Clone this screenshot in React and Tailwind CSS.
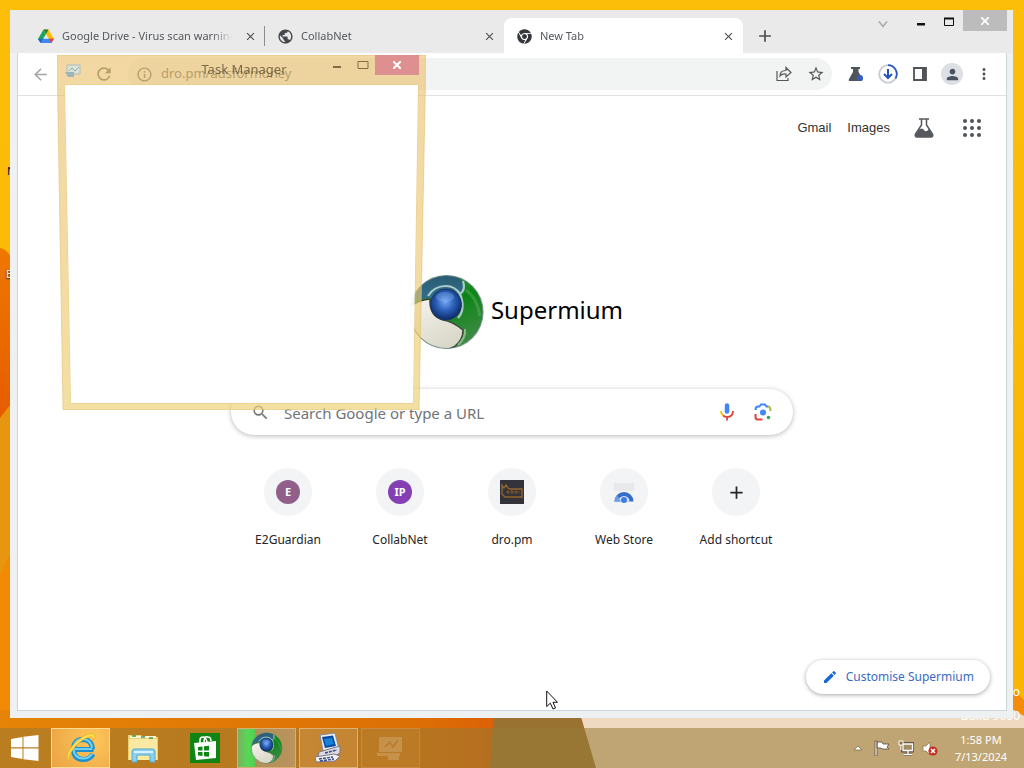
import React from "react";
import { MdArrowBack, MdRefresh, MdInfoOutline, MdStarBorder, MdPerson, MdMoreVert, MdSearch, MdEdit, MdAdd, MdClose, MdPublic } from "react-icons/md";
import { FaChrome } from "react-icons/fa";

function Wallpaper() {
  return (
    <svg className="absolute inset-0 h-full w-full" viewBox="0 0 1024 768" preserveAspectRatio="none" aria-hidden="true">
      <defs>
        <linearGradient id="yellow" x1="0" y1="0" x2="0" y2="1">
          <stop offset="0" stopColor="#fcbe08" />
          <stop offset="1" stopColor="#fab400" />
        </linearGradient>
        <linearGradient id="left" x1="0" y1="0" x2="0" y2="1">
          <stop offset="0" stopColor="#ee7800" />
          <stop offset="1" stopColor="#e65c00" />
        </linearGradient>
        <linearGradient id="floor" x1="0" y1="0" x2="1" y2="0">
          <stop offset="0" stopColor="#e58407" />
          <stop offset="0.8" stopColor="#dd7005" />
          <stop offset="1" stopColor="#dc5f05" />
        </linearGradient>
      </defs>
      <rect width="1024" height="768" fill="url(#yellow)" />
      <path d="M0 248Q8 249 12 260V420H0Z" fill="url(#left)" />
      <path d="M0 418L14 400V620H0Z" fill="#e6960f" />
      <path d="M0 575L14 545V768H0Z" fill="#f38a05" />
      <rect y="710" width="510" height="58" fill="url(#floor)" />
      <path d="M494 710H582L600 768H490Z" fill="#997232" />
      <path d="M579 710H1024V768H596Z" fill="#efdac1" />
      <path d="M1004 680L1024 700V716L1004 704Z" fill="#f58b0b" />
    </svg>
  );
}

function SupermiumLogo({ className }) {
  return (
    <svg className={className} viewBox="0 0 76 76" aria-hidden="true">
      <defs>
        <linearGradient id="sg" x1="0" y1="0" x2="0.4" y2="1">
          <stop offset="0" stopColor="#3f9a4c" />
          <stop offset="0.5" stopColor="#0c8415" />
          <stop offset="1" stopColor="#3c8a42" />
        </linearGradient>
        <linearGradient id="sb" x1="0" y1="0" x2="0" y2="1">
          <stop offset="0" stopColor="#2a5a72" />
          <stop offset="1" stopColor="#337390" />
        </linearGradient>
        <linearGradient id="sc" x1="0" y1="0" x2="0.6" y2="1">
          <stop offset="0" stopColor="#f6f5ef" />
          <stop offset="1" stopColor="#d9d7c8" />
        </linearGradient>
        <radialGradient id="ball" cx="0.48" cy="0.42" r="0.6">
          <stop offset="0" stopColor="#74a8f2" />
          <stop offset="0.45" stopColor="#2e62bd" />
          <stop offset="1" stopColor="#09265f" />
        </radialGradient>
        <clipPath id="disc"><circle cx="37.5" cy="38" r="36.5" /></clipPath>
      </defs>
      <g clipPath="url(#disc)">
        <rect width="76" height="76" fill="url(#sg)" />
        <path d="M0 30Q6 25 20 24L37 30L50 24Q55 18 54 8L46 0H0Z" fill="url(#sb)" />
        <path d="M0 34Q8 26 21 25Q20 42 34 46Q43 47 54 56Q54 66 46 72Q40 76 30 76H0Z" fill="url(#sc)" stroke="#3f4b40" strokeWidth="1.5" />
        <path d="M49 71Q57 64 56 55" fill="none" stroke="#87bc86" strokeWidth="2" />
        <path d="M57 16Q68 24 71 42" fill="none" stroke="#74b975" strokeWidth="3" opacity="0.35" />
      </g>
      <path d="M19 22Q25 12 37 12Q46 12 51 20Q57 16 54 7M51 20Q57 35 49 44" fill="none" stroke="#a9cbc9" strokeWidth="2.2" />
      <circle cx="37" cy="30.500" r="15.500" fill="url(#ball)" stroke="#153864" />
      <ellipse cx="36" cy="23" rx="9" ry="5" fill="#9bc2f5" opacity="0.3" />
      <circle cx="37.500" cy="38" r="36.500" fill="none" stroke="#6c8984" strokeWidth="1.2" opacity="0.8" />
    </svg>
  );
}

function DriveIcon() {
  return (
    <svg className="size-4 shrink-0" viewBox="0 0 16 16" aria-hidden="true">
      <path d="M5.500 1.500L0 11L2.700 15L8 6Z" fill="#1da462" />
      <path d="M5.500 1.500H10.500L16 11H10.800Z" fill="#fbbc04" />
      <path d="M2.700 15L5.300 10.700H16L13.300 15Z" fill="#4285f4" />
      <path d="M5.300 10.700L2.700 15L0 11Z" fill="#1b66d2" />
      <path d="M10.800 10.700H16L13.300 15Z" fill="#ea4335" />
      <path d="M5.500 1.500H10.500L8 6Z" fill="#188038" />
    </svg>
  );
}

function Tab({ icon, title, active, divider }) {
  return (
    <div className={"flex h-9 w-[239px] min-w-0 items-center gap-2 px-3 " + (active ? "rounded-t-lg bg-white " : "") + (divider ? "bg-[linear-gradient(#8a8d91,#8a8d91)] bg-[length:1px_20px] bg-right bg-no-repeat" : "")}>
      <span className="flex w-4 shrink-0 justify-center">{icon}</span>
      <a href="#tab" className="min-w-0 flex-1 overflow-hidden whitespace-nowrap text-[11px] text-[#55585c] [mask-image:linear-gradient(to_right,black_88%,transparent)]">{title}</a>
      <button aria-label={"Close " + title} className="-mr-1 ml-1 shrink-0 text-[#4a4d51]"><MdClose size={13} /></button>
    </div>
  );
}

function WindowControls() {
  return (
    <div className="ml-auto flex h-full items-start">
      <button aria-label="Search tabs" className="flex h-7 w-8 items-center justify-center">
        <svg className="size-3" viewBox="0 0 12 12" fill="none" stroke="#a9a9a9" strokeWidth="1.500"><path d="M2 3.500L6 8.500L10 3.500" /></svg>
      </button>
      <button aria-label="Minimise" className="ml-2 flex h-6 w-7 items-center justify-center">
        <svg className="size-3" viewBox="0 0 12 12"><path d="M2 7H10V9.500H2Z" fill="#111" /></svg>
      </button>
      <button aria-label="Maximise" className="flex h-6 w-7 items-center justify-center">
        <svg className="h-3 w-3" viewBox="0 0 12 12" fill="none" stroke="#111"><path d="M1.500 2.500H10.500V9.500H1.500Z" /><path d="M1 2.500H11" strokeWidth="2" /></svg>
      </button>
      <button aria-label="Close window" className="flex h-[21px] w-11 items-center justify-center bg-[#bcbcbc] text-white">
        <svg className="size-2" viewBox="0 0 8 8" stroke="currentColor" strokeWidth="1.800"><path d="M0 0L8 8M8 0L0 8" /></svg>
      </button>
    </div>
  );
}

function ToolButton({ label, children }) {
  return <button aria-label={label} className="flex size-8 shrink-0 items-center justify-center text-[#54575b]">{children}</button>;
}

function Toolbar() {
  return (
    <div className="flex h-[43px] items-center border-b border-[#dfe1e3] bg-white px-1.5">
      <ToolButton label="Back"><span className="text-[#a5a5a5]"><MdArrowBack size={19} /></span></ToolButton>
      <div className="w-8 shrink-0" />
      <ToolButton label="Reload"><MdRefresh size={20} /></ToolButton>
      <div className="ml-2 flex h-8 min-w-0 flex-1 items-center rounded-full bg-[#f2f3f3] pl-2 text-[#54575b]">
        <MdInfoOutline size={17} />
        <input aria-label="Address" defaultValue="dro.pm/adsformoney" className="ml-2 min-w-0 flex-1 bg-transparent text-[13px] outline-none" />
        <ToolButton label="Share">
          <svg className="size-4" viewBox="0 0 16 16" fill="none" stroke="currentColor" strokeWidth="1.200"><path d="M1 5V14.500H12V12M4 10Q4 4.500 10 4.500V1.500L15 6.500L10 11V8Q6 7.500 4 10Z" /></svg>
        </ToolButton>
        <ToolButton label="Bookmark"><MdStarBorder size={18} /></ToolButton>
      </div>
      <div className="ml-2 flex">
        <ToolButton label="Experiments">
          <svg className="size-4" viewBox="0 0 16 16"><path d="M3 1H12V3H10.500V6L14.500 13Q15 15 13 15H2Q0 15 1 13L5 6V3H3Z" fill="#50545b" /><circle cx="12" cy="12" r="3" fill="#365cbf" /></svg>
        </ToolButton>
        <ToolButton label="Downloads">
          <svg className="size-5" viewBox="0 0 20 20" fill="none"><circle cx="10" cy="10" r="8.800" stroke="#c6cbd0" strokeWidth="1.800" /><path d="M10 1.200A8.800 8.800 0 0 1 17.500 14.500" stroke="#2d5bc4" strokeWidth="1.800" /><path d="M10 5V14M6 10L10 14L14 10" stroke="#2452b8" strokeWidth="2" /></svg>
        </ToolButton>
        <ToolButton label="Side panel">
          <svg className="size-4" viewBox="0 0 16 16"><path d="M2 2H14V14H2Z" fill="none" stroke="#505357" strokeWidth="1.800" /><path d="M10 2H14V14H10Z" fill="#505357" /></svg>
        </ToolButton>
        <ToolButton label="Profile"><span className="flex size-[22px] items-center justify-center rounded-full bg-[#dcdfe4] text-[#4a5260]"><MdPerson size={17} /></span></ToolButton>
        <ToolButton label="Menu"><MdMoreVert size={18} /></ToolButton>
      </div>
    </div>
  );
}

const shortcuts = [
  { name: "E2Guardian", icon: <span className="flex size-6 items-center justify-center rounded-full bg-[#90608a] text-[11px] font-bold text-white">E</span> },
  { name: "CollabNet", icon: <span className="flex size-6 items-center justify-center rounded-full bg-[#843fb3] text-[11px] font-bold text-white">IP</span> },
  {
    name: "dro.pm",
    icon: (
      <svg className="size-6" viewBox="0 0 24 24"><rect width="24" height="24" fill="#35333a" /><path d="M2 5L4 8L6 5L8 8L10 9H22V17H5L2 14Z" fill="none" stroke="#94672d" strokeWidth="1.300" /><path d="M6 12H20M8 10V14M12 10V14M16 10V14M5 17H20" stroke="#785729" strokeWidth="1.200" /></svg>
    ),
  },
  {
    name: "Web Store",
    icon: (
      <svg className="size-6" viewBox="0 0 24 24"><path d="M2 3H22V11H2Z" fill="#e7e9ed" /><path d="M2.500 21.500A9.500 9.500 0 0 1 21.500 21.500Z" fill="#356dcb" /><path d="M6.500 21.500A5.500 5.500 0 0 1 17.500 21.500Z" fill="#dbe8ff" /><circle cx="12" cy="20" r="3" fill="#3f7ee0" /><path d="M2.500 21.500Q3 17 5 15L9 21.500Z" fill="#6c9eea" /></svg>
    ),
  },
  { name: "Add shortcut", icon: <MdAdd size={21} /> },
];

function NewTabPage() {
  return (
    <main className="flex flex-1 flex-col bg-white">
      <nav className="flex h-16 items-center justify-end pr-6 font-['Liberation_Sans',sans-serif] text-[13px] text-[#333]">
        <a href="#gmail">Gmail</a>
        <a href="#images" className="ml-4">Images</a>
        <button aria-label="Labs" className="ml-6">
          <svg className="size-5" viewBox="0 0 20 20"><path d="M5 1H15M7.500 1V7L1.500 16Q.5 19 3 19H17Q19.500 19 18.500 16L12.500 7V1" fill="none" stroke="#55585c" strokeWidth="1.500" /><path d="M4.500 12Q8 9 10 12T15 11L18.500 17Q18 19 17 19H3Q1 18 2 16Z" fill="#55585c" /></svg>
        </button>
        <button aria-label="Apps" className="ml-7">
          <svg className="size-5" viewBox="0 0 20 20" fill="#505357">{[4, 10, 16].map((y) => [4, 10, 16].map((x) => <circle key={x + "-" + y} cx={x + (x - 10) / 6} cy={y + (y - 10) / 6} r="2" />))}</svg>
        </button>
      </nav>
      <h1 className="mt-[114px] flex items-center justify-center pl-2 text-[24px] font-normal text-black">
        <SupermiumLogo className="mr-1.5 size-[76px]" />
        <span className="pb-1">Supermium</span>
      </h1>
      <form className="mx-auto mt-[39px] flex h-[46px] w-[562px] max-w-full items-center rounded-full bg-white px-5 shadow-[0_1px_5px_rgba(32,33,36,0.32)]">
        <span className="text-[#77797c]"><MdSearch size={19} /></span>
        <input aria-label="Search Google or type a URL" placeholder="Search Google or type a URL" className="ml-3.5 min-w-0 flex-1 bg-transparent pt-0.5 text-[15px] outline-none placeholder:text-[#717478] placeholder:opacity-100" />
        <button type="button" aria-label="Voice search" className="mr-4">
          <svg className="h-5 w-5" viewBox="0 0 20 20" fill="none"><path d="M10 3.500V9.500" stroke="#4285f4" strokeWidth="4.500" strokeLinecap="round" /><path d="M4 9Q4 12 6 13.500" stroke="#fbbc04" strokeWidth="1.800" /><path d="M6 13.500Q8 15 10 15Q16 15 16 9M10 15V18.500" stroke="#db4437" strokeWidth="1.800" /></svg>
        </button>
        <button type="button" aria-label="Image search">
          <svg className="h-5 w-5" viewBox="0 0 20 20" fill="none" strokeWidth="2"><path d="M2.500 8Q2.500 4.500 5 4.500H6.500L8 2.500H12L13.500 4.500H15" stroke="#4285f4" /><path d="M15 4.500Q17.500 4.500 17.500 9" stroke="#9fbf45" /><path d="M2.500 12V15Q2.500 17.500 5 17.500H9.500" stroke="#dc4437" /><circle cx="10" cy="10.500" r="3" fill="#4285f4" /><circle cx="15.500" cy="15.500" r="1.800" fill="#34a853" /></svg>
        </button>
      </form>
      <ul className="mt-[33px] flex justify-center">
        {shortcuts.map((s) => (
          <li key={s.name} className="w-28">
            <a href="#shortcut" className="flex flex-col items-center text-[12px] leading-4 text-[#252525]">
              <span className="mb-4 flex size-12 items-center justify-center rounded-full bg-[#f3f4f5]">{s.icon}</span>
              {s.name}
            </a>
          </li>
        ))}
      </ul>
      <div className="mt-auto flex justify-end pb-4 pr-4">
        <button className="flex h-[34px] items-center gap-2 rounded-full bg-white px-4 text-[12px] text-[#3a6cc2] shadow-[0_1px_4px_rgba(32,33,36,0.4)]">
          <span className="text-[#1968d8]"><MdEdit size={16} /></span>
          Customise Supermium
        </button>
      </div>
    </main>
  );
}

function TaskManager() {
  return (
    <section aria-label="Task Manager" className="absolute left-[57px] top-[55px] h-[355px] w-[369px]">
      <svg className="absolute inset-0 h-full w-full" viewBox="0 0 369 355" aria-hidden="true">
        <defs>
          <linearGradient id="tm" x1="0" y1="0" x2="0" y2="1"><stop offset="0" stopColor="#ebc272" /><stop offset="1" stopColor="#ecce70" /></linearGradient>
        </defs>
        <path d="M0 0H369L362 355H6Z M8 30L14 348H356L361 30Z" fillRule="evenodd" fill="url(#tm)" fillOpacity="0.65" stroke="#e2bf76" strokeOpacity="0.6" />
        <path d="M8 30H361L356 348H14Z" fill="#fff" fillOpacity="0.94" />
      </svg>
      <header className="relative flex h-[30px] items-start pl-2 pr-[7px]">
        <svg className="mt-2 size-4 opacity-70" viewBox="0 0 16 16" aria-hidden="true"><path d="M2 2H15V11H2Z" fill="#d5e7ed" stroke="#8cb5c6" /><path d="M4 8L7 5L10 8L14 4" fill="none" stroke="#4fa5b8" /><path d="M0 9H9V14H3Z" fill="#7ba8c5" /></svg>
        <h2 className="flex-1 pl-24 pt-1.5 text-center text-[13px] leading-4 text-[#4b4026] opacity-70">Task Manager</h2>
        <button aria-label="Minimise Task Manager" className="ml-3 flex h-5 w-7 items-center justify-center"><svg className="size-3" viewBox="0 0 12 12"><path d="M2 8H10" stroke="#826c42" strokeWidth="2" /></svg></button>
        <button aria-label="Maximise Task Manager" className="flex h-5 w-6 items-center justify-center"><svg className="size-3" viewBox="0 0 12 12"><path d="M1 2.500H11V9.500H1Z" fill="none" stroke="#826c42" /></svg></button>
        <button aria-label="Close Task Manager" className="flex h-5 w-11 items-center justify-center bg-[#de9090]"><svg className="size-2" viewBox="0 0 8 8" stroke="#fff" strokeWidth="2"><path d="M0 0L8 8M8 0L0 8" /></svg></button>
      </header>
    </section>
  );
}

function ComputerIcon() {
  return (
    <svg className="size-8" viewBox="0 0 32 32"><path d="M7 3L22 1L26 17L10 19Z" fill="#ecebe4" stroke="#8a8797" /><path d="M9 5L20 3.500L23 14L12 16Z" fill="#0648a7" /><path d="M11 7L19 6L21 12L13 14Z" fill="#1682d6" /><path d="M6 20L27 14V21L18 26H5Z" fill="#dddce1" stroke="#777785" /><path d="M2 25L21 22L27 24L22 29L3 30Z" fill="#f4f2ed" stroke="#777892" /><path d="M6 27L20 25M7 29L21 27M12 21L24 18" stroke="#344a86" strokeWidth="1.500" strokeDasharray="3 1" /></svg>
  );
}

function Taskbar() {
  const item = "flex h-10 w-[59px] shrink-0 items-center justify-center border ";
  return (
    <footer className="relative flex h-10 items-stretch bg-[#987a35]/55">
      <button aria-label="Start" className="flex w-[51px] items-center pl-[11px]">
        <svg className="h-[26px] w-7" viewBox="0 0 28 26" fill="#fff"><path d="M0 4L11.500 2V12.300H0ZM12.500 1.800L27.500 0V12.300H12.500ZM0 13.500H11.500V24L0 22ZM12.500 13.500H27.500V26L12.500 24.200Z" /></svg>
      </button>
      <div className="flex gap-[3px]">
        <button aria-label="Internet Explorer" className={item + "border-[#f9db91] bg-[radial-gradient(circle_at_70%_30%,#ffc65c,#e9a343)]"}>
          <svg className="size-8" viewBox="0 0 32 32" fill="none"><path d="M28.500 17.500H9M28 22Q25 27.500 18 27.500Q8.500 27 8.500 17Q9 7.500 18 7.500Q27 8 27.500 17.500" stroke="#218fca" strokeWidth="5" /><path d="M27 17H10M27 22Q24 26.500 18 26.500Q9 26 8.500 17Q9 7 18 7Q26 7.500 27 16" stroke="#6ed1f5" strokeWidth="2.200" /><path d="M4 29Q-2 22 12 9Q25 -2 30 3Q31 5 28 9Q29 4 25 5Q18 6 10 15Q2 25 5 27Z" fill="#ffdf4c" stroke="#e1a61d" strokeWidth=".6" /></svg>
        </button>
        <button aria-label="File Explorer" className={item + "border-transparent"}>
          <svg className="size-8" viewBox="0 0 32 32"><path d="M1 3H14L16 5H31V28H1Z" fill="#edce71" /><path d="M2 7H30V28H2Z" fill="#fae9a3" /><path d="M3 5H29" stroke="#fff5d0" strokeWidth="2" /><path d="M5 4H9M14 5H18M22 6H26" stroke="#3d9562" strokeWidth="1.500" /><path d="M5 30V19Q5 17 8 17H25Q28 17 28 19V30H23V23H10V30Z" fill="#8bd0ef" stroke="#57a9ce" /><path d="M7 20H26" stroke="#d6f2ff" strokeWidth="2" /></svg>
        </button>
        <button aria-label="Store" className={item + "border-transparent"}>
          <svg className="size-[30px]" viewBox="0 0 30 30"><rect width="30" height="30" fill="#118513" /><path d="M4 10L26 8V25L6 27Z" fill="#fff" /><path d="M10 10V7Q10 4 13 4Q16 4 17 9M14 9Q14 3 18 4Q21 4 21 8" fill="none" stroke="#fff" strokeWidth="1.500" /><path d="M8 14L12.500 13.500V17.500H8ZM14 13.300L19 12.800V17.500H14ZM8 19H12.500V23L8 22.600ZM14 19H19V23.700L14 23.200Z" fill="#118513" /></svg>
        </button>
        <button aria-label="Supermium" className={item + "border-[#d9ae72] bg-[linear-gradient(to_right,#7bb160_0,#55da55_18%,#55cc50_29%,#b09059_32%,#bb935c_100%)]"}><SupermiumLogo className="size-8" /></button>
        <button aria-label="System" className={item + "border-[#dcb175] bg-[#d5994b]/45"}><ComputerIcon /></button>
        <button aria-label="Task Manager" className={item + "border-[#d19a56]/50 bg-[#d5994b]/15"}>
          <svg className="size-8 opacity-30" viewBox="0 0 32 32"><path d="M4 5H27V20H4Z" fill="#e2c79f" /><path d="M10 15L15 10L18 15L23 8" fill="none" stroke="#b98a55" strokeWidth="2" /><path d="M2 21H25V24H2ZM13 24H24V28H13Z" fill="#e2c79f" /></svg>
        </button>
      </div>
      <div className="ml-auto flex items-center text-white">
        <button aria-label="Show hidden icons" className="mr-3"><svg className="size-2" viewBox="0 0 8 8"><path d="M0 6L4 2L8 6Z" fill="#fff" stroke="#77603c" strokeWidth=".7" /></svg></button>
        <button aria-label="Action Center" className="mr-2"><svg className="size-4" viewBox="0 0 16 16" stroke="#5c4935" strokeWidth=".8"><path d="M1 1H3V16H1ZM3 2H8L9 4H15L13 7L15 9H8L7 8H3Z" fill="#fff" /></svg></button>
        <button aria-label="Network" className="mr-2"><svg className="size-4" viewBox="0 0 16 16"><path d="M4.500 3.500H15V11H4.500ZM10 11V14M6 14.500H14" fill="none" stroke="#65543f" strokeWidth="3" /><path d="M5 4H14.500V10.500H5ZM10 11V14M6 14.500H14" fill="#a48c62" stroke="#fff" strokeWidth="1.300" /><path d="M1 1H5V5H1ZM3 5V10" fill="#8a7550" stroke="#fff" /></svg></button>
        <button aria-label="Volume muted" className="mr-3"><svg className="size-4" viewBox="0 0 16 16"><path d="M1 6H4L8 2V15L4 11H1Z" fill="#fff" stroke="#76623f" strokeWidth=".6" /><circle cx="11" cy="11" r="4.600" fill="#c92c20" /><path d="M9 9L13 13M13 9L9 13" stroke="#fff" strokeWidth="1.600" /></svg></button>
        <button className="w-[62px] text-center text-[11px] leading-[17px]"><time>1:58 PM<br />7/13/2024</time></button>
        <div className="w-3" />
      </div>
    </footer>
  );
}

export default function App() {
  return (
    <div className="relative flex min-h-screen flex-col overflow-hidden font-['Noto_Sans','Open_Sans',sans-serif]">
      <Wallpaper />
      <div className="absolute bottom-10 right-1 text-right text-[12px] leading-6 text-white">Windows 8.1 Pro<br />Build 9600</div>
      <span className="absolute left-[7px] top-[163px] text-[11px] text-black">N</span>
      <span className="absolute left-[6px] top-[266px] text-[11px] text-white [text-shadow:0_1px_2px_black]">E</span>
      <div className="relative flex flex-1 flex-col pb-2.5 pl-2.5 pr-[11px] pt-2.5">
        <section aria-label="Browser" className="flex flex-1 flex-col bg-[#eaeaea]">
          <header className="flex h-[43px] items-start">
            <div className="mt-2 flex items-center pl-4">
              <Tab icon={<DriveIcon />} title="Google Drive - Virus scan warning" divider />
              <Tab icon={<span className="text-[#45484c]"><MdPublic size={17} /></span>} title="CollabNet" />
              <Tab icon={<span className="text-[#35383c]"><FaChrome size={15} /></span>} title="New Tab" active />
              <button aria-label="New tab" className="ml-3 text-[#4a4d51]"><MdAdd size={20} /></button>
            </div>
            <WindowControls />
            <div className="h-full w-1.5" />
          </header>
          <div className="flex flex-1 bg-[#edf1f2] pb-[7px] pl-[7px] pr-1.5">
            <div className="flex min-w-0 flex-1 flex-col border-x border-b border-[#ccd6d8]">
              <Toolbar />
              <NewTabPage />
            </div>
          </div>
        </section>
      </div>
      <TaskManager />
      <Taskbar />
      <svg className="pointer-events-none absolute left-[546px] top-[690px] h-5 w-3" viewBox="0 0 12 20" aria-hidden="true"><path d="M.7 1V16.500L4.300 13.200L7 19L9.500 18L7 12.300H11.500Z" fill="#fff" stroke="#111" /></svg>
    </div>
  );
}
